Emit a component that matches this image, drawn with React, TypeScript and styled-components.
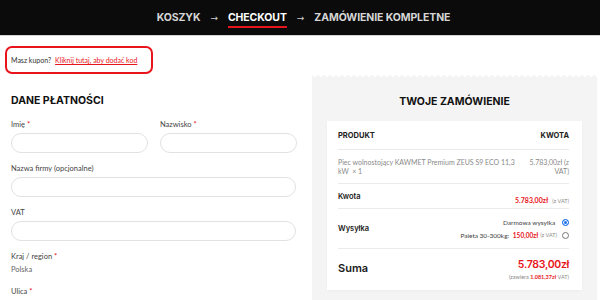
import styled, { createGlobalStyle } from "styled-components";

const RED = "#e8141b";

export default function App() {
  return (
    <>
      <Global />
      <Steps>
        <Step>KOSZYK</Step>
        <Arrow>→</Arrow>
        <Step active>CHECKOUT</Step>
        <Arrow>→</Arrow>
        <Step>ZAMÓWIENIE KOMPLETNE</Step>
      </Steps>
      <Content>
        <Coupon>
          Masz kupon? <CouponLink href="#">Kliknij tutaj, aby dodać kod</CouponLink>
        </Coupon>
        <Columns>
          <Billing>
            <Heading>DANE PŁATNOŚCI</Heading>
            <FieldRow>
              <Field>
                <Label>Imię <Req>*</Req></Label>
                <Input />
              </Field>
              <Field>
                <Label>Nazwisko <Req>*</Req></Label>
                <Input />
              </Field>
            </FieldRow>
            <Field>
              <Label>Nazwa firmy (opcjonalne)</Label>
              <Input />
            </Field>
            <Field>
              <Label>VAT</Label>
              <Input />
            </Field>
            <Field>
              <Label>Kraj / region <Req>*</Req></Label>
              <Country>Polska</Country>
            </Field>
            <Field>
              <Label>Ulica <Req>*</Req></Label>
              <Input />
            </Field>
          </Billing>

          <OrderPanel>
            <Heading center>TWOJE ZAMÓWIENIE</Heading>
            <Card>
              <Row height={29}>
                <HeadCell>PRODUKT</HeadCell>
                <HeadCell>KWOTA</HeadCell>
              </Row>
              <Row height={34}>
                <ProductName>Piec wolnostojący KAWMET Premium ZEUS S9 ECO 11,3 kW&nbsp;&nbsp;× 1</ProductName>
                <ProductPrice>5.783,00zł (z VAT)</ProductPrice>
              </Row>
              <Row height={25}>
                <RowTitle>Kwota</RowTitle>
                <span>
                  <Amount size={7}>5.783,00zł</Amount> <Tax>(z VAT)</Tax>
                </span>
              </Row>
              <Row height={40}>
                <RowTitle>Wysyłka</RowTitle>
                <Shipping>
                  <Option>
                    Darmowa wysyłka <Radio checked />
                  </Option>
                  <Option>
                    Paleta 30-300kg: <Amount size={6.5}>150,00zł</Amount> <Tax>(z VAT)</Tax> <Radio />
                  </Option>
                </Shipping>
              </Row>
              <Row height={41} last>
                <RowTitle big>Suma</RowTitle>
                <Total>
                  <TotalPrice>5.783,00zł</TotalPrice>
                  <Tax>
                    (zawiera <Amount size={5.5}>1.081,37zł</Amount> VAT)
                  </Tax>
                </Total>
              </Row>
            </Card>
          </OrderPanel>
        </Columns>
      </Content>
    </>
  );
}

const Global = createGlobalStyle`
  html, body {
    margin: 0;
    overflow: hidden;
    background: #fff;
  }
  * { box-sizing: border-box; }
`;

const Steps = styled.nav`
  height: 36px;
  background: #0b0b0b;
  border-bottom: 1px solid #d4d4d4;
  display: flex;
  align-items: center;
  justify-content: center;
  gap: 10px;
  padding-left: 7px;
  font-family: Inter, sans-serif;
`;

const Step = styled.span<{ active?: boolean }>`
  font-size: 10.5px;
  font-weight: 700;
  letter-spacing: -0.1px;
  color: ${p => (p.active ? "#fff" : "#d6d6d6")};
  padding-bottom: 2px;
  border-bottom: 2px solid ${p => (p.active ? RED : "transparent")};
  margin-top: 4px;
`;

const Arrow = styled.span`
  color: #cfcfcf;
  font-size: 9px;
  font-family: "DejaVu Sans", sans-serif;
`;

const Content = styled.main`
  padding: 10px 3px 0 11px;
  font-family: Lato, sans-serif;
`;

const Coupon = styled.div`
  width: 148px;
  height: 28px;
  margin-left: -6px;
  border: 2px solid ${RED};
  border-radius: 7px;
  display: flex;
  align-items: center;
  gap: 4px;
  padding-left: 4px;
  font-size: 7px;
  color: #333;
  white-space: nowrap;
`;

const CouponLink = styled.a`
  color: ${RED};
  text-decoration: underline;
`;

const Columns = styled.div`
  display: grid;
  grid-template-columns: 285px 285px;
  column-gap: 16px;
  margin-top: 1px;
`;

const Billing = styled.section`
  padding-top: 18px;
`;

const Heading = styled.h2<{ center?: boolean }>`
  margin: 0 0 11px;
  font-family: Inter, sans-serif;
  font-size: 10.5px;
  line-height: 16px;
  font-weight: 700;
  color: #111;
  text-align: ${p => (p.center ? "center" : "left")};
`;

const FieldRow = styled.div`
  display: grid;
  grid-template-columns: 137px 137px;
  column-gap: 12px;
`;

const Field = styled.div`
  margin-bottom: 11px;
`;

const Label = styled.div`
  font-size: 7.5px;
  line-height: 10px;
  color: #444;
  margin-bottom: 3px;
`;

const Req = styled.span`
  color: ${RED};
`;

const Input = styled.input`
  display: block;
  width: 100%;
  height: 20px;
  border: 1px solid #e2e2e2;
  border-radius: 10px;
  background: #fff;
  outline: none;
`;

const Country = styled.div`
  font-size: 7.5px;
  line-height: 10px;
  color: #666;
  padding-bottom: 1px;
`;

const OrderPanel = styled.section`
  position: relative;
  background: #f4f4f4;
  padding: 19px 15px 0;
  height: 230px;

  &::before {
    content: "";
    position: absolute;
    left: 0;
    right: 0;
    top: 0;
    height: 3px;
    background: radial-gradient(circle at 50% 0, #fff 1.6px, transparent 2px) 0 0 / 6px 3px repeat-x;
  }
`;

const Card = styled.div`
  background: #fff;
  padding: 0 13px 0 11px;
  box-shadow: 0 1px 3px rgba(0, 0, 0, 0.03);
`;

const Row = styled.div<{ height: number; last?: boolean }>`
  height: ${p => p.height}px;
  display: flex;
  align-items: center;
  justify-content: space-between;
  border-bottom: ${p => (p.last ? "none" : "1px solid #ebebeb")};
`;

const HeadCell = styled.span`
  font-family: Inter, sans-serif;
  font-size: 7.5px;
  font-weight: 700;
  color: #222;
`;

const ProductName = styled.span`
  width: 180px;
  font-size: 7px;
  line-height: 9px;
  color: #8a8a8a;
`;

const ProductPrice = styled.span`
  width: 50px;
  font-size: 7px;
  line-height: 9px;
  color: #8a8a8a;
  text-align: right;
`;

const RowTitle = styled.span<{ big?: boolean }>`
  font-family: Inter, sans-serif;
  font-size: ${p => (p.big ? "11px" : "7.5px")};
  font-weight: 600;
  color: #1a1a1a;
  margin-top: ${p => (p.big ? "-3px" : "0")};
`;

const Amount = styled.span<{ size: number }>`
  color: ${RED};
  font-weight: 700;
  font-size: ${p => p.size}px;
`;

const Tax = styled.span`
  color: #888;
  font-size: 5.5px;
`;

const Shipping = styled.div`
  display: flex;
  flex-direction: column;
  align-items: flex-end;
  gap: 4px;
`;

const Option = styled.div`
  display: flex;
  align-items: center;
  gap: 2px;
  font-size: 6.5px;
  line-height: 9px;
  color: #444;
  white-space: pre;
`;

const Radio = styled.span<{ checked?: boolean }>`
  width: 7px;
  height: 7px;
  margin-left: 3px;
  border-radius: 50%;
  border: 1px solid ${p => (p.checked ? "#1a73e8" : "#777")};
  background: ${p => (p.checked ? "#1a73e8" : "#fff")};
  box-shadow: ${p => (p.checked ? "inset 0 0 0 1px #fff" : "none")};
`;

const Total = styled.div`
  display: flex;
  flex-direction: column;
  align-items: flex-end;
  gap: 3px;
  margin-top: -2px;
`;

const TotalPrice = styled.span`
  font-family: Inter, sans-serif;
  font-size: 10.5px;
  font-weight: 600;
  letter-spacing: -0.3px;
  color: ${RED};
`;
